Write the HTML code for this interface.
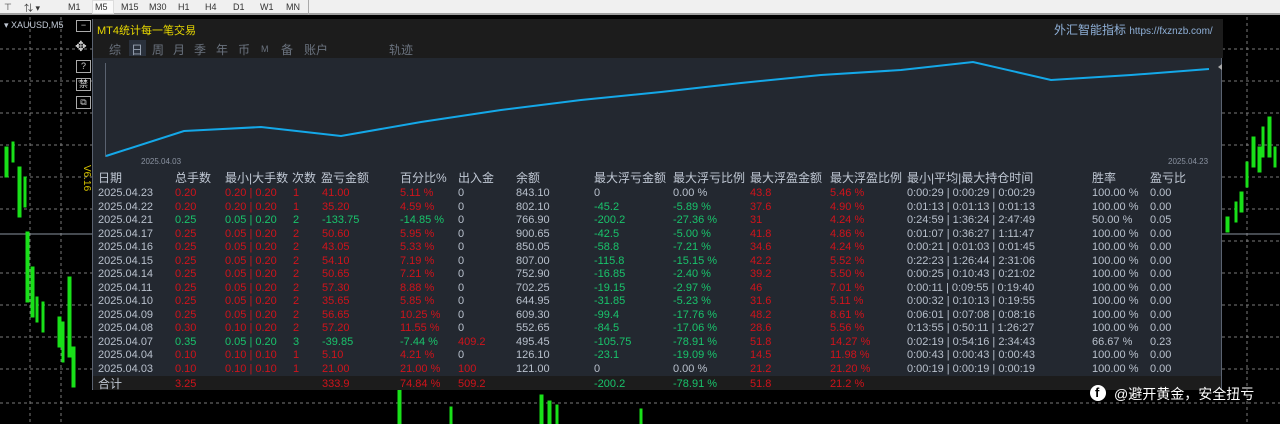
<!DOCTYPE html>
<html><head><meta charset="utf-8"><style>
*{margin:0;padding:0;box-sizing:border-box}
body{width:1280px;height:424px;overflow:hidden;background:#000;font-family:"Liberation Sans","Noto Sans CJK SC",sans-serif;position:relative}
.a{position:absolute;white-space:nowrap}
#tb{left:0;top:0;width:1280px;height:15px;background:#f0f0f0;border-bottom:2px solid #a0a0a0;font-size:9px;color:#333}
#panel{left:92px;top:19px;width:1130px;height:371px;background:#232830;border-left:1px solid #5a6270;border-right:1px solid #5a6270;border-bottom:2px solid #6a7280}
#hdr{left:0;top:0;width:1130px;height:39px;background:#1c1c1c}
.t{position:absolute;font-size:11px;white-space:nowrap;line-height:13px;color:#b8c0cc}
.r{color:#d0131b}.g{color:#19c36b}.h{color:#c0c8d4;font-size:12px}
.tab{position:absolute;top:22px;color:#6a727e;font-size:12px}
</style></head><body>
<div id="tb" class="a">
<span class="a" style="left:4px;top:2px">⊤</span><span class="a" style="left:24px;top:1px">⇅ ▾</span>
<span class="a" style="left:68px;top:2px">M1</span><span class="a" style="left:92px;top:0;width:22px;height:14px;background:#fafafa;border:1px solid #ddd"></span><span class="a" style="left:95px;top:2px">M5</span><span class="a" style="left:121px;top:2px">M15</span><span class="a" style="left:149px;top:2px">M30</span><span class="a" style="left:178px;top:2px">H1</span><span class="a" style="left:205px;top:2px">H4</span><span class="a" style="left:233px;top:2px">D1</span><span class="a" style="left:260px;top:2px">W1</span><span class="a" style="left:286px;top:2px">MN</span>
<span class="a" style="left:308px;top:0;width:1px;height:15px;background:#aaa"></span>
</div>
<svg class="a" style="left:0;top:17px" width="1280" height="407">
<g stroke="#7a7a7a" stroke-dasharray="3,3" stroke-width="1">
<line x1="30" y1="0" x2="30" y2="407"/><line x1="61" y1="0" x2="61" y2="407"/>
<line x1="1247" y1="0" x2="1247" y2="407"/>
<line x1="0" y1="32" x2="92" y2="32"/><line x1="0" y1="64" x2="92" y2="64"/><line x1="0" y1="96" x2="92" y2="96"/><line x1="0" y1="128" x2="92" y2="128"/><line x1="0" y1="160" x2="92" y2="160"/><line x1="0" y1="192" x2="92" y2="192"/><line x1="0" y1="256" x2="92" y2="256"/><line x1="0" y1="288" x2="92" y2="288"/><line x1="0" y1="320" x2="92" y2="320"/><line x1="0" y1="352" x2="92" y2="352"/><line x1="0" y1="386" x2="1280" y2="386"/>
<line x1="1222" y1="32" x2="1280" y2="32"/><line x1="1222" y1="64" x2="1280" y2="64"/><line x1="1222" y1="96" x2="1280" y2="96"/><line x1="1222" y1="128" x2="1280" y2="128"/><line x1="1222" y1="160" x2="1280" y2="160"/><line x1="1222" y1="192" x2="1280" y2="192"/><line x1="1222" y1="224" x2="1280" y2="224"/><line x1="1222" y1="256" x2="1280" y2="256"/><line x1="1222" y1="288" x2="1280" y2="288"/><line x1="1222" y1="320" x2="1280" y2="320"/><line x1="1222" y1="352" x2="1280" y2="352"/>
</g>
<line x1="0" y1="217" x2="92" y2="217" stroke="#8a93a0"/><line x1="1222" y1="217" x2="1280" y2="217" stroke="#8a93a0"/>
<g fill="#19e019" stroke="#19e019">
<rect x="5" y="130" width="3" height="30"/><rect x="12" y="125" width="2" height="20"/><rect x="18" y="150" width="3" height="50"/><rect x="24" y="160" width="2" height="30"/><rect x="26" y="215" width="3" height="70"/><rect x="31" y="250" width="3" height="50"/><rect x="36" y="280" width="2" height="25"/><rect x="42" y="285" width="2" height="30"/><rect x="58" y="300" width="3" height="30"/><rect x="62" y="305" width="2" height="40"/><rect x="68" y="260" width="3" height="80"/><rect x="72" y="330" width="3" height="40"/>
<rect x="1226" y="200" width="3" height="15"/><rect x="1235" y="185" width="2" height="20"/><rect x="1240" y="175" width="3" height="20"/><rect x="1246" y="145" width="2" height="25"/><rect x="1252" y="120" width="3" height="30"/><rect x="1258" y="130" width="3" height="25"/><rect x="1262" y="110" width="2" height="30"/><rect x="1268" y="100" width="3" height="40"/><rect x="1274" y="130" width="2" height="20"/>
<rect x="398" y="372" width="3" height="35"/><rect x="450" y="390" width="2" height="17"/><rect x="540" y="378" width="3" height="29"/><rect x="548" y="384" width="3" height="23"/><rect x="556" y="388" width="2" height="19"/><rect x="640" y="392" width="2" height="15"/>
</g>
</svg>
<span class="a" style="left:4px;top:20px;color:#c0c8d4;font-size:9px">▾ XAUUSD,M5</span>
<div class="a" style="left:76px;top:20px;width:15px;height:12px;border:1px solid #aaa;color:#ccc;font-size:9px;text-align:center;line-height:9px">−</div>
<span class="a" style="left:75px;top:38px;color:#ccc;font-size:14px">✥</span>
<div class="a" style="left:76px;top:60px;width:15px;height:13px;border:1px solid #aaa;color:#ccc;font-size:9px;text-align:center;line-height:11px">?</div>
<div class="a" style="left:76px;top:78px;width:15px;height:13px;border:1px solid #aaa;color:#ccc;font-size:9px;text-align:center;line-height:11px">禁</div>
<div class="a" style="left:76px;top:96px;width:15px;height:13px;border:1px solid #aaa;color:#ccc;font-size:9px;text-align:center;line-height:11px">⧉</div>
<span class="a" style="top:165px;color:#d8c400;font-size:10px;transform:rotate(90deg);transform-origin:left top;left:92px">V6.16</span>
<div id="panel" class="a">
<div id="hdr" class="a">
<span class="a" style="left:4px;top:3px;color:#e8d800;font-size:11px">MT4统计每一笔交易</span>
<span class="a" style="left:961px;top:2px;color:#8fb0d8;font-size:12px">外汇智能指标 <span style="font-size:10px">https://fxznzb.com/</span></span>
<div class="a" style="left:36px;top:21px;width:17px;height:16px;background:#2a313c"></div>
<span class="tab" style="left:16px">综</span><span class="tab" style="left:38px;color:#9aa4b4">日</span><span class="tab" style="left:59px">周</span><span class="tab" style="left:80px">月</span><span class="tab" style="left:101px">季</span><span class="tab" style="left:123px">年</span><span class="tab" style="left:145px">币</span><span class="tab" style="left:168px;font-size:9px;top:25px">M</span><span class="tab" style="left:188px">备</span><span class="tab" style="left:211px">账户</span>
<span class="tab" style="left:296px">轨迹</span>
</div>
<div class="a" style="left:12px;top:44px;width:1px;height:94px;background:#5a6270"></div>
<svg class="a" style="left:0;top:0" width="1130" height="150"><polyline fill="none" stroke="#14a8e8" stroke-width="2" points="13,137 91,112 168,108 248,117 328,103 408,91 488,81 568,73 648,64 728,56 808,51 880,43 958,61 1038,56 1116,50"/><path d="M1129,45 l-4,3 l4,3z" fill="#aaa"/></svg>
<span class="a" style="left:48px;top:138px;color:#8a92a0;font-size:8px">2025.04.03</span>
<span class="a" style="left:1075px;top:138px;color:#8a92a0;font-size:8px">2025.04.23</span>
<div class="a" style="left:0;top:357px;width:1128px;height:14px;background:#1c1c1c"></div>
</div>
<div class="a" style="left:0;top:0">
<div class="t h" style="left:98px;top:172px">日期</div><div class="t h" style="left:175px;top:172px">总手数</div><div class="t h" style="left:225px;top:172px">最小|大手数</div><div class="t h" style="left:292px;top:172px">次数</div><div class="t h" style="left:321px;top:172px">盈亏金额</div><div class="t h" style="left:400px;top:172px">百分比%</div><div class="t h" style="left:458px;top:172px">出入金</div><div class="t h" style="left:516px;top:172px">余额</div><div class="t h" style="left:594px;top:172px">最大浮亏金额</div><div class="t h" style="left:673px;top:172px">最大浮亏比例</div><div class="t h" style="left:750px;top:172px">最大浮盈金额</div><div class="t h" style="left:830px;top:172px">最大浮盈比例</div><div class="t h" style="left:907px;top:172px">最小|平均|最大持仓时间</div><div class="t h" style="left:1092px;top:172px">胜率</div><div class="t h" style="left:1150px;top:172px">盈亏比</div>
</div>
<div id="rows" class="a" style="left:0;top:0"></div>
<script>
var d=[
["2025.04.23","r","0.20","0.20 | 0.20","1","41.00","5.11 %","0","843.10","0","0.00 %","43.8","5.46 %","0:00:29 | 0:00:29 | 0:00:29","100.00 %","0.00"],
["2025.04.22","r","0.20","0.20 | 0.20","1","35.20","4.59 %","0","802.10","-45.2","-5.89 %","37.6","4.90 %","0:01:13 | 0:01:13 | 0:01:13","100.00 %","0.00"],
["2025.04.21","g","0.25","0.05 | 0.20","2","-133.75","-14.85 %","0","766.90","-200.2","-27.36 %","31","4.24 %","0:24:59 | 1:36:24 | 2:47:49","50.00 %","0.05"],
["2025.04.17","r","0.25","0.05 | 0.20","2","50.60","5.95 %","0","900.65","-42.5","-5.00 %","41.8","4.86 %","0:01:07 | 0:36:27 | 1:11:47","100.00 %","0.00"],
["2025.04.16","r","0.25","0.05 | 0.20","2","43.05","5.33 %","0","850.05","-58.8","-7.21 %","34.6","4.24 %","0:00:21 | 0:01:03 | 0:01:45","100.00 %","0.00"],
["2025.04.15","r","0.25","0.05 | 0.20","2","54.10","7.19 %","0","807.00","-115.8","-15.15 %","42.2","5.52 %","0:22:23 | 1:26:44 | 2:31:06","100.00 %","0.00"],
["2025.04.14","r","0.25","0.05 | 0.20","2","50.65","7.21 %","0","752.90","-16.85","-2.40 %","39.2","5.50 %","0:00:25 | 0:10:43 | 0:21:02","100.00 %","0.00"],
["2025.04.11","r","0.25","0.05 | 0.20","2","57.30","8.88 %","0","702.25","-19.15","-2.97 %","46","7.01 %","0:00:11 | 0:09:55 | 0:19:40","100.00 %","0.00"],
["2025.04.10","r","0.25","0.05 | 0.20","2","35.65","5.85 %","0","644.95","-31.85","-5.23 %","31.6","5.11 %","0:00:32 | 0:10:13 | 0:19:55","100.00 %","0.00"],
["2025.04.09","r","0.25","0.05 | 0.20","2","56.65","10.25 %","0","609.30","-99.4","-17.76 %","48.2","8.61 %","0:06:01 | 0:07:08 | 0:08:16","100.00 %","0.00"],
["2025.04.08","r","0.30","0.10 | 0.20","2","57.20","11.55 %","0","552.65","-84.5","-17.06 %","28.6","5.56 %","0:13:55 | 0:50:11 | 1:26:27","100.00 %","0.00"],
["2025.04.07","g","0.35","0.05 | 0.20","3","-39.85","-7.44 %","409.2","495.45","-105.75","-78.91 %","51.8","14.27 %","0:02:19 | 0:54:16 | 2:34:43","66.67 %","0.23"],
["2025.04.04","r","0.10","0.10 | 0.10","1","5.10","4.21 %","0","126.10","-23.1","-19.09 %","14.5","11.98 %","0:00:43 | 0:00:43 | 0:00:43","100.00 %","0.00"],
["2025.04.03","r","0.10","0.10 | 0.10","1","21.00","21.00 %","100","121.00","0","0.00 %","21.2","21.20 %","0:00:19 | 0:00:19 | 0:00:19","100.00 %","0.00"]];
var xs=[98,175,225,293,322,400,458,516,594,673,750,830,907,1092,1150],h="";
d.forEach(function(r,i){var y=187+i*13.5,c=r[1];
var v=[r[0],r[2],r[3],r[4],r[5],r[6],r[7],r[8],r[9],r[10],r[11],r[12],r[13],r[14],r[15]];
v.forEach(function(t,j){var cl="";
if(j>=1&&j<=5)cl=c;
if(j==6)cl=(t=="0")?"":"r";
if(j==8||j==9)cl=(t=="0"||t=="0.00 %")?"":"g";
if(j==10||j==11)cl="r";
h+='<div class="t '+cl+'" style="left:'+xs[j]+'px;top:'+y+'px">'+t+'</div>';});});
var tot=[["合计","",98,12],["3.25","r",175],["333.9","r",322],["74.84 %","r",400],["509.2","r",458],["-200.2","g",594],["-78.91 %","g",673],["51.8","r",750],["21.2 %","r",830]];
tot.forEach(function(t){h+='<div class="t '+t[1]+'" style="left:'+t[2]+'px;top:378px;'+(t[3]?'font-size:12px;color:#c0c8d4':'')+'">'+t[0]+'</div>';});
document.getElementById("rows").innerHTML=h;
</script>
<div class="a" style="left:1090px;top:385px;width:16px;height:16px;border-radius:50%;background:#fff"></div>
<span class="a" style="left:1095px;top:385px;color:#000;font-size:13px;font-weight:bold">f</span>
<span class="a" style="left:1114px;top:384px;color:#fff;font-size:14px">@避开黄金，安全扭亏</span>
</body></html>
